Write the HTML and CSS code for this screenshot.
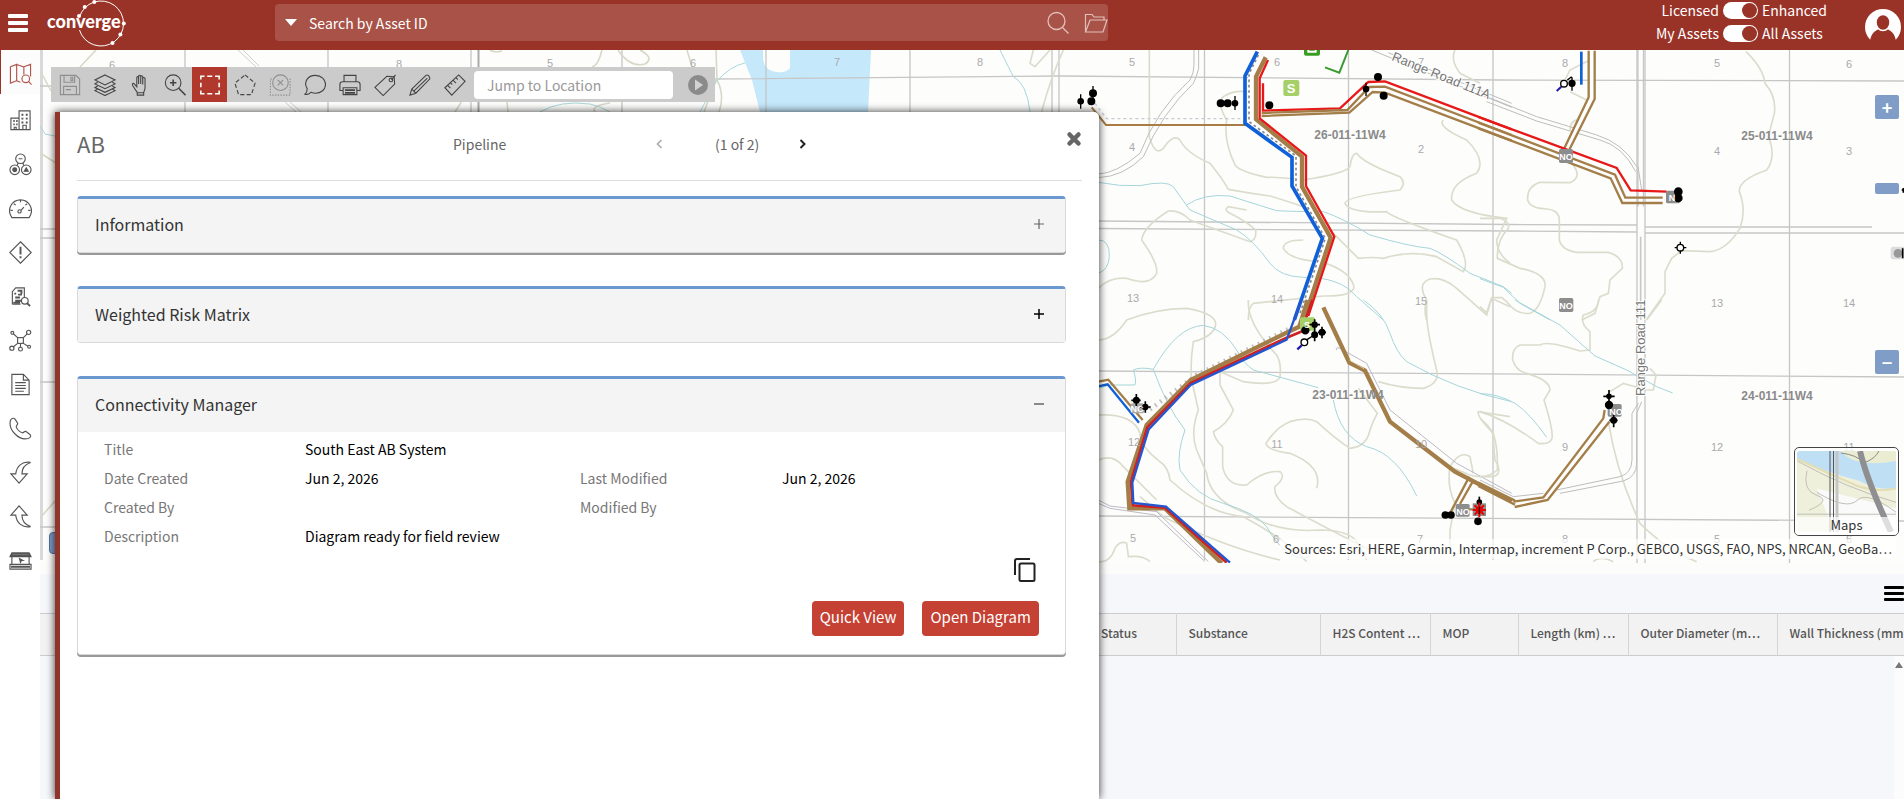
FILE: index.html
```html
<!DOCTYPE html>
<html lang="en">
<head>
<meta charset="utf-8">
<title>Converge</title>
<link rel="stylesheet" href="styles.css">
</head>
<body>
<header class="topbar">
  <button class="menu-btn" aria-label="Menu"><i></i><i></i><i></i></button>
  <svg class="logo" viewBox="44 0 86 50" role="img" aria-label="converge">
    <path d="M79.500 17A22.500 22.500 0 1 1 79.500 30" fill="none" stroke="#fff" stroke-width="1"/>
    <g fill="#fff"><circle cx="94.300" cy="2" r="2"/><circle cx="84.700" cy="7" r="2"/><circle cx="79" cy="16" r="2"/><circle cx="123.800" cy="23.500" r="2"/><circle cx="120.400" cy="34.500" r="2"/><circle cx="112.500" cy="43" r="2"/></g>
    <text x="47" y="28" class="logo-text">converge</text>
  </svg>
  <form class="search">
    <button type="button" class="caret" aria-label="Search type"></button>
    <input type="text" class="search-input" placeholder="Search by Asset ID" aria-label="Search by Asset ID">
    <button type="button" class="bare" aria-label="Search"><svg width="24" height="24" viewBox="0 0 24 24" fill="none" stroke="#e3bfba" stroke-width="1.3"><circle cx="10.500" cy="10" r="8.500"/><path d="M16.500 16.500L22.500 22.500"/></svg></button>
    <button type="button" class="bare" aria-label="Open saved"><svg width="24" height="24" viewBox="0 0 24 24" fill="none" stroke="#e3bfba" stroke-width="1.2"><path d="M1.500 21V3.500H8L10 6H20V9M1.500 21L6 9H23L19 21Z"/></svg></button>
  </form>
  <div class="switches">
    <label for="sw1">Licensed</label><input type="checkbox" id="sw1" class="switch" checked><span>Enhanced</span>
    <label for="sw2">My Assets</label><input type="checkbox" id="sw2" class="switch" checked><span>All Assets</span>
  </div>
  <button class="bare avatar" aria-label="Account"><svg width="36" height="36" viewBox="0 0 36 36"><circle cx="18" cy="18" r="18" fill="#fff"/><path d="M18 6a6.500 7.500 0 0 1 3.500 14C27 21.500 31 26 31.500 36H4.500C5 26 9 21.500 14.500 20A6.500 7.500 0 0 1 18 6Z" fill="#993328"/><ellipse cx="18" cy="13.500" rx="7" ry="8" fill="#993328" stroke="#fff" stroke-width="1.500"/></svg></button>
</header>
<div class="body">
<nav class="rail">
  <button class="rail-item active" aria-label="Map"><svg viewBox="0 0 24 24"><path d="M1.500 4L8 1.500V18.500L1.500 21ZM8 1.500L15.500 4V12M8 18.500L12 20M15.500 4L22.500 1.500V14"/><circle cx="17.500" cy="16.500" r="4"/><path d="M20.500 19.500L23.500 22.500"/></svg></button>
  <div class="rail-list">
  <button class="rail-item" aria-label="Facilities"><svg viewBox="0 0 24 24"><path d="M2 21.500V9.500H10.500V2H22V21.500ZM10.500 9.500V21.500M14.500 21.500V17H18V21.500M5.500 21.500V19H7.500V21.500"/><path d="M4.500 12.500h1.500M7.500 12.500h1.500M4.500 16h1.500M7.500 16h1.500M13 6h2M17.500 6h2M13 10h2M17.500 10h2M13 14h2M17.500 14h2" stroke-width="2"/></svg></button>
  <button class="rail-item" aria-label="Risk"><svg viewBox="0 0 24 24"><circle cx="12" cy="6" r="5"/><circle cx="6" cy="17.500" r="5"/><circle cx="18" cy="17.500" r="5"/><path d="M10 6h4M9.500 10.500L8.500 13M14.500 10.500L15.500 13"/><circle cx="6" cy="17.500" r="2" fill="#555"/><path d="M16 19h4l-2-3.500z" fill="#555"/></svg></button>
  <button class="rail-item" aria-label="Dashboard"><svg viewBox="0 0 24 24"><path d="M3 21.500C-3 13 3 3 12 3S27 13 21 21.500Z"/><path d="M12 3V5.500M5 7L7 8.500M1.500 14H4M19 7L17 8.500M22.500 14H20"/><circle cx="11" cy="15" r="1.700"/><path d="M12.500 14L15.500 10.500"/></svg></button>
  <button class="rail-item" aria-label="Alerts"><svg viewBox="0 0 24 24"><path d="M12 .8L23.200 12L12 23.200L.8 12Z"/><path d="M12 6V14M12 16V18" stroke-width="2"/></svg></button>
  <button class="rail-item" aria-label="Reports"><svg viewBox="0 0 24 24"><path d="M3.500 20V7L7 3H16V13M3.500 20H12"/><path d="M5.500 9h2M6.500 13h5M6.500 16.500h6M9 6h5M9.500 10h4M13 9V6M4.500 18.500h7" stroke-width="2"/><circle cx="16.500" cy="16.500" r="3.500"/><path d="M19 19L22 22" stroke-width="2"/></svg></button>
  <button class="rail-item" aria-label="Connectivity"><svg viewBox="0 0 24 24"><rect x="9" y="9" width="6" height="6"/><path d="M9 9L4.500 5M15 9L19 5M9 15L4 19M15 15L20 18M12 15V19"/><circle cx="3.500" cy="4" r="1.500"/><circle cx="20.500" cy="3.500" r="2.200"/><circle cx="3" cy="20" r="2.200"/><circle cx="12" cy="21" r="2"/><circle cx="21" cy="18.500" r="1.500"/></svg></button>
  <button class="rail-item" aria-label="Documents"><svg viewBox="0 0 24 24"><path d="M3 1.500H15L21 7.500V22.500H3ZM15 1.500V7.500H21M6.500 10h11M6.500 13h11M6.500 16h11M6.500 19h9"/></svg></button>
  <button class="rail-item" aria-label="Calls"><svg viewBox="0 0 24 24"><path d="M1.500 3.500C3 1 5 .5 6.500 2.500L9 6.500C9.500 8 7.500 9 7.500 10C8.500 13 11 15.500 14 16.500C15.500 16.500 16 14.500 17.500 15L21.500 18C23.500 19.500 22.500 21.500 20 22.500C10 25-1 13 1.500 3.500Z"/></svg></button>
  <button class="rail-item" aria-label="Check in"><svg viewBox="0 0 24 24"><path d="M22.500 1.500C14 0 8 5 7 13.500H2L10.500 23L19 13.500H13.500C13.500 8 16.500 3.500 22.500 1.500Z"/></svg></button>
  <button class="rail-item" aria-label="Check out"><svg viewBox="0 0 24 24"><path d="M22.500 22.500C14 24 8 19 7 10.500H2L10.500 1L19 10.500H13.500C13.500 16 16.500 20.500 22.500 22.500Z"/></svg></button>
  <button class="rail-item" aria-label="Operations"><svg viewBox="0 0 24 24"><path d="M3 16V5H21V16M1 8L3 4H21L23 8ZM1 21V16H23V21Z"/><path d="M11 10l1 4 1-2h1.500z" fill="#555"/><path d="M2 18.500H22M2 6.500H22" stroke-width="2"/></svg></button>
  </div>
</nav>
<main class="main">
  <section class="map" aria-label="Map">
    <svg class="map-canvas" viewBox="40 50 1864 513" preserveAspectRatio="xMinYMin slice" fill="none">
      <rect x="40" y="50" width="1864" height="520" fill="#fdfdfc"/>
      <path d="M740 50L752 80L760 112H868L871 50H790V68Q787 73 777 72Q764 71 763 58V50Z" fill="#c5e8fb"/>
      <!-- section grid -->
      <g stroke="#c6c6c6" stroke-width="1.300">
        <path d="M40 50V560M42 50V560M185 50V560M328 50V560M471 50V560M622 50V560M766 50V560M910 50V560M1052 50V560M1059 50V560M1204.500 50V560M1348.500 50V560M1493 50V560M1637 50V563M1645 50V563M1789.500 50V563"/>
        <path d="M40 86H55M40 229H60M40 238H60M40 382H60M40 527H60M715 79L1060 76L1500 80L1904 81M1098 221L1510 224.500L1637 225M1645 227H1872M1098 228.500L1510 231L1637 232M1645 233H1904M1098 371L1904 377M1098 516L1904 521"/>
        <path d="M478.500 50V112" stroke="#aaa" stroke-width="2"/>
      </g>
      <g stroke="#cfcfcf"><path d="M238 50L256 67M243 50L259 66M284 101L296 112M289 101L301 112"/></g>
      <!-- contours west of the panel -->
      <g stroke="#d9d8c8" stroke-width="1.600">
        <path d="M96 50L80 67M41 72L51 91M40 153L56 163M40 518L56 500M602 50Q598 66 592 67M490 50Q495 53 502 51M618 50Q630 68 645 64Q655 58 640 50M687 50L692 67M716 50L717 80Q725 95 719 112M455 112L462 101M508 112L507 102M595 112Q590 106 610 103M704 112L716 80"/>
      </g>
      <g stroke="#a9d8dc"><path d="M40 126L45 134L60 137M540 112Q560 100 590 104Q600 106 610 112M700 112L716 82Q730 66 745 63"/></g>
      <!-- north west sheet -->
      <g transform="translate(1090 40) scale(.33333)">
        <g stroke="#dcdccd" stroke-width="5">
          <path d="M178 30V290Q195 350 220 325Q250 280 270 300Q290 340 360 370Q400 420 415 448Q480 460 540 468Q580 480 640 500L740 590L805 655Q850 650 880 655Q960 630 1040 650L1120 695Q1140 670 1100 600Q900 530 890 515Q780 520 765 490Q765 470 930 450Q950 430 930 410Q820 370 800 340Q785 340 780 380Q770 400 640 420Q560 410 530 412Q450 395 435 375Q400 300 410 240Q380 190 400 170Q430 150 470 155"/>
          <path d="M25 745Q60 710 110 715Q180 740 200 700Q205 670 155 600Q160 560 235 513Q270 510 300 540L480 605Q500 600 497 570Q470 545 420 520Q400 510 415 500L470 510"/>
          <path d="M640 600Q580 600 580 625Q600 660 690 665Q780 690 792 740Q790 770 700 768L490 790Q475 800 475 840M1095 30Q1080 60 1110 100L1170 130M1060 240Q1040 260 1130 300Q1190 360 1160 400Q1080 430 1085 480Q1110 520 1250 535L1220 600Q1220 640 1260 670M1010 840Q1000 810 1010 780Q980 730 1020 717Q1060 710 1100 745L1190 825L1205 775L1260 800"/>
          <path d="M-80 30Q-120 120 -145 215M-170 30L-180 70L-165 80L-120 30"/>
        </g>
        <g stroke="#a5d5da" stroke-width="3"><path d="M25 427Q90 440 150 437Q230 420 250 440Q270 470 300 510Q370 540 440 570Q490 600 540 670Q570 710 640 712Q750 710 800 770L880 840M290 495Q340 460 420 468Q520 500 560 512Q610 515 700 515Q760 535 840 585Q960 620 1020 625Q1060 640 1140 700L1240 740L1265 760M25 600Q60 600 58 650Q55 690 25 700"/><path d="M-270 30Q-240 90 -230 110Q-190 130 -180 215"/></g>
        <g stroke="#bdbdbd" stroke-width="3"><path d="M312 30V75Q312 100 300 120Q200 210 150 340Q80 400 25 402M326 30V85Q320 110 310 130Q215 220 160 350Q100 410 25 413"/><path d="M845 30L1265 202M895 38L1265 190"/></g>
        <path d="M15 190L50 236H460" stroke="#c9c9cf" stroke-width="4" stroke-dasharray="9 9"/>
        <path d="M5 202L48 255H470L500 235" stroke="#a87c43" stroke-width="6"/>
        <path d="M485 95V245L624 345V440L712 595L636 820" stroke="#fff" stroke-width="22"/>
        <path d="M505 45L477 102V245L618 348V440L706 595L630 820" stroke="#888" stroke-width="5" stroke-dasharray="8 8"/>
        <path d="M502 35L465 108V250L606 352V438L697 595L613 840" stroke="#1060d8" stroke-width="11"/>
        <path d="M527 52L498 110V238L636 350V440L722 593L645 830" stroke="#a37e48" stroke-width="13"/>
        <path d="M534 60L509 115V235L648 347V438L733 590L655 828M519 130V212L750 205L835 126L885 124L1265 268" stroke="#e81818" stroke-width="7"/>
        <path d="M515 228L778 218L848 156L885 158L1265 302M515 219L772 210L838 141L885 140L1265 285" stroke="#a37e48" stroke-width="7"/>
        <path d="M705 82L748 98L775 30" stroke="#3b9a30" stroke-width="6"/>
        <rect x="642" y="10" width="48" height="37" rx="6" fill="#3a9d23"/><path d="M655 30V35H677V30" stroke="#fff" stroke-width="6"/>
        <rect x="580" y="120" width="48" height="48" rx="6" fill="#a6cf67"/>
        <g fill="#000" stroke="#000" stroke-width="4"><circle cx="9" cy="160" r="10"/><circle cx="4" cy="184" r="10"/><circle cx="-28" cy="184" r="8"/><path d="M9 138V180M-28 163V206"/><circle cx="392" cy="190" r="10"/><circle cx="413" cy="190" r="10"/><circle cx="435" cy="190" r="8"/><path d="M435 168V210"/><circle cx="538" cy="196" r="10"/><circle cx="864" cy="111" r="10"/><circle cx="828" cy="147" r="8"/><path d="M828 128V168"/><circle cx="881" cy="167" r="10"/></g>
      </g>
      <!-- north east sheet -->
      <g transform="translate(1480 40) scale(.33333)">
        <g stroke="#dcdccd" stroke-width="5"><path d="M798 35Q850 85 855 130Q890 170 883 220L865 290Q890 350 860 390Q775 420 778 455Q800 510 780 565Q740 630 690 635L605 632L575 655L555 695V760L500 838"/><path d="M340 55L270 90L255 120M270 155L320 180M300 238Q270 240 270 270M275 370Q310 410 270 428L180 427Q140 440 143 480Q150 505 200 507Q240 510 238 545V600Q245 630 290 637H385Q430 650 427 685L390 720L385 760L360 770L345 820L305 840M0 535H60Q90 545 85 565Q50 600 52 655L120 685Q200 700 195 740Q180 810 150 820Q110 825 80 785L65 773H35L20 818L0 800"/></g>
        <path d="M0 716L70 742L120 790L210 840" stroke="#a5d5da" stroke-width="3"/>
        <g stroke="#bdbdbd" stroke-width="3"><path d="M20 170L170 230Q270 260 350 285Q430 310 470 380M20 185L170 243L360 300Q430 320 467 395M474 30V500M490 30V500M474 380L485 450"/></g>
        <path d="M482 590V840" stroke="#c8c8c8" stroke-width="5"/>
        <path d="M304 35V134" stroke="#1060d8" stroke-width="8"/>
        <path d="M335 32V175L257 330" stroke="#fff" stroke-width="12"/>
        <path d="M326 32V172L248 335M344 32V177L265 335" stroke="#a37e48" stroke-width="7"/>
        <path d="M-5 231L410 384L452 451L560 455" stroke="#e81818" stroke-width="7"/>
        <path d="M-5 248L405 404L436 473H548M-5 265L392 415L427 489H548" stroke="#a37e48" stroke-width="7"/>
        <g fill="#8d8d8d"><rect x="237" y="327" width="42" height="42" rx="5"/><rect x="558" y="452" width="42" height="38" rx="5"/><rect x="237" y="774" width="43" height="42" rx="5"/></g>
        <g fill="#000" stroke="#000" stroke-width="4"><circle cx="595" cy="455" r="11"/><circle cx="595" cy="474" r="11"/><circle cx="276" cy="130" r="9"/><path d="M276 112V152M262 120L275 110"/></g>
        <circle cx="252" cy="131" r="10" fill="#fff" stroke="#000" stroke-width="4"/><path d="M244 140L230 153" stroke="#2018a8" stroke-width="6"/>
        <circle cx="601" cy="623" r="10" stroke="#000" stroke-width="4"/><path d="M601 605V614M601 632V641M584 623H592M610 623H619" stroke="#000" stroke-width="4"/>
        <rect x="1232" y="620" width="50" height="38" rx="8" fill="#ddd"/><circle cx="1254" cy="640" r="13" fill="#999"/>
        <path d="M1268 625V655M1265 450H1272M1270 444V458" stroke="#000" stroke-width="5"/>
      </g>
      <!-- south west sheet -->
      <g transform="translate(1090 300) scale(.33333)">
        <g stroke="#dcdccd" stroke-width="5">
          <path d="M25 120Q70 120 110 60Q200 25 290 25Q380 40 377 75Q370 110 310 125Q300 190 305 240L325 330Q300 400 320 450L350 520Q360 600 470 640Q560 700 690 690Q790 690 810 740L830 780"/>
          <path d="M475 0Q470 70 560 165Q575 190 570 230Q560 260 460 245L390 215V255L430 330Q415 370 370 395Q375 420 398 440V500Q410 560 470 555Q520 510 570 515Q590 530 555 560Q550 590 590 620Q700 680 850 755"/>
          <path d="M1010 0V40Q1010 90 1040 210Q1050 250 1000 265Q930 265 865 245M150 590L220 650Q400 740 570 780M25 345Q130 340 150 400Q150 440 210 485Q235 500 240 540Q350 640 460 650Q590 720 650 785M25 480Q70 460 100 500L200 600M680 565Q700 500 600 460Q530 450 528 430Q560 380 600 365Q650 350 680 365Q740 420 780 445Q830 440 840 390Q850 360 862 340L805 265M1260 350L1165 335Q1160 350 1210 400Q1225 450 1222 510Q1190 540 1140 525L1080 500M1080 500Q1110 450 1140 470L1150 520M1080 500Q1070 560 1095 610L1080 690V740M25 785Q60 790 75 745Q90 720 110 730L115 770Q160 765 180 785"/>
        </g>
        <g stroke="#a5d5da" stroke-width="3"><path d="M25 265L60 255H135Q140 240 130 210Q150 200 190 208Q260 80 340 76Q400 85 440 150Q460 190 490 210L685 263M190 208Q230 320 285 390Q260 460 270 510Q320 590 400 610Q500 640 530 680Q580 770 640 775L660 770M730 300Q750 410 830 440Q920 460 980 588M820 0Q880 40 900 100Q920 160 950 185Q1100 270 1265 305"/></g>
        <g stroke="#bdb8c4" stroke-width="3"><path d="M740 150Q735 140 750 145L830 190Q860 250 900 330L1100 490L1265 580M25 600L60 618L200 635L355 785M25 610L60 625L195 645L345 785"/></g>
        <path d="M180 328L320 225L600 85" stroke="#bfbfbf" stroke-width="14" stroke-dasharray="5 14"/>
        <path d="M653 0L628 80L600 93L302 240L170 375L113 545L118 625H225L395 790" stroke="#a37e48" stroke-width="13"/>
        <path d="M667 0L648 55M640 92L590 113L302 249L172 382L123 545L128 616L225 623L410 788" stroke="#d02020" stroke-width="8"/>
        <path d="M634 0L590 119L302 255L176 388L127 548L130 609L228 620L420 788" stroke="#2456cf" stroke-width="7"/>
        <path d="M25 245L55 239L158 360" stroke="#a37e48" stroke-width="7"/><path d="M25 259L53 253L147 368" stroke="#1060d8" stroke-width="7"/>
        <path d="M700 22L778 188L825 212L900 365L1095 515L1265 604" stroke="#a37e48" stroke-width="13"/>
        <path d="M778 180L822 206" stroke="#f4e8d2" stroke-width="2"/>
        <path d="M1138 530L1082 636M1148 545L1110 612M1130 628H1150" stroke="#a37e48" stroke-width="7"/>
        <rect x="630" y="52" width="45" height="40" rx="5" fill="#a6cf67"/>
        <g fill="#8d8d8d"><rect x="1097" y="612" width="42" height="38" rx="5"/><rect x="122" y="310" width="40" height="30" rx="5" fill="#aaa"/><rect x="1148" y="610" width="40" height="38"/></g>
        <g fill="#000" stroke="#000" stroke-width="5"><circle cx="646" cy="91" r="10"/><circle cx="674" cy="74" r="7"/><circle cx="696" cy="97" r="8"/><circle cx="674" cy="104" r="8"/><path d="M674 58V124M658 74H690M696 80V115M684 97H708"/><circle cx="139" cy="301" r="8"/><circle cx="166" cy="321" r="7"/><path d="M139 282V318M124 301H152M166 304V338M150 321H182"/><circle cx="1066" cy="645" r="9"/><circle cx="1083" cy="645" r="9"/><circle cx="1164" cy="664" r="9"/><circle cx="1168" cy="606" r="6"/><path d="M1168 590V640"/></g>
        <circle cx="643" cy="127" r="10" fill="#fff" stroke="#000" stroke-width="4"/><path d="M635 136L622 148" stroke="#2018a8" stroke-width="7"/><path d="M651 119L668 108" stroke="#000" stroke-width="4"/>
        <path d="M1168 608V652M1148 630H1188M1154 616L1182 644M1182 616L1154 644" stroke="#e80000" stroke-width="6"/><circle cx="1168" cy="630" r="11" fill="#e80000"/><path d="M1168 620V642" stroke="#000" stroke-width="3"/>
      </g>
      <!-- south east sheet -->
      <g transform="translate(1480 300) scale(.33333)">
        <g stroke="#dcdccd" stroke-width="5"><path d="M355 0Q355 35 310 45Q300 70 330 95V150L300 153Q200 120 180 135H120Q95 145 98 180Q110 215 140 220Q210 240 210 270L192 300Q220 390 216 415Q210 435 175 430Q80 360 0 335M0 355Q30 380 38 400L45 480Q70 520 40 530H0M390 275L430 250L500 270H520L528 225L510 205M500 60L545 0M385 365Q410 520 480 670Q560 750 650 785M340 785Q360 765 400 785"/></g>
        <g stroke="#a5d5da" stroke-width="3"><path d="M105 0L240 75Q290 120 345 168L440 210L530 260L578 279M0 281Q50 280 105 310Q150 340 200 412"/></g>
        <g stroke="#bdbdbd" stroke-width="3"><path d="M485 305L470 340V490Q470 530 430 543L240 580M475 310L456 340V480Q455 520 420 530L230 570M0 540L100 590L190 580"/></g>
        <path d="M-5 548L105 602M-5 558L105 614" stroke="#a37e48" stroke-width="7"/>
        <path d="M100 605L190 592L370 355L374 330M104 621L203 600L388 365" stroke="#a37e48" stroke-width="7"/>
        <rect x="383" y="312" width="42" height="38" rx="5" fill="#8d8d8d"/>
        <g fill="#000" stroke="#000" stroke-width="5"><circle cx="387" cy="315" r="10"/><circle cx="387" cy="289" r="6"/><circle cx="401" cy="361" r="8"/><path d="M387 270V305M370 289H404M401 342V382M388 361H413"/></g>
      </g>
      <g class="tag"><text x="1566" y="160">NO</text><text x="1672" y="201">N</text><text x="1566" y="309">NO</text><text x="1463" y="515">NO</text><text x="1616" y="415">NO</text><text x="1307" y="328">S</text><text x="1137" y="412">NC</text></g>
      <text class="pt-s" x="1291" y="93">S</text>
      <g class="sec">
        <text x="112" y="69">6</text><text x="399" y="68">8</text><text x="550" y="67">5</text><text x="693" y="67">6</text><text x="837" y="66">7</text><text x="980" y="66">8</text><text x="1132" y="66">5</text><text x="1277" y="66">6</text><text x="1421" y="66">7</text><text x="1565" y="67">8</text><text x="1717" y="67">5</text><text x="1849" y="68">6</text>
        <text x="1132" y="151">4</text><text x="1421" y="153">2</text><text x="1717" y="155">4</text><text x="1849" y="155">3</text>
        <text x="1133" y="302">13</text><text x="1277" y="303">14</text><text x="1421" y="305">15</text><text x="1717" y="307">13</text><text x="1849" y="307">14</text>
        <text x="1134" y="446">12</text><text x="1277" y="448">11</text><text x="1421" y="448">10</text><text x="1565" y="451">9</text><text x="1717" y="451">12</text><text x="1849" y="451">11</text>
        <text x="1133" y="542">5</text><text x="1276" y="543">6</text><text x="1420" y="543">7</text><text x="1565" y="543">8</text><text x="1717" y="543">5</text><text x="1849" y="543">6</text>
      </g>
      <g class="twp"><text x="1350" y="139">26-011-11W4</text><text x="1777" y="140">25-011-11W4</text><text x="1348" y="399">23-011-11W4</text><text x="1777" y="400">24-011-11W4</text></g>
      <g class="road"><text transform="translate(1391 60) rotate(22)">Range Road 111A</text><text transform="translate(1645 396) rotate(-90)">Range Road 111</text></g>
    </svg>
    <button class="side-tab" aria-label="Expand"></button>
    <div class="toolbar">
      <button class="tool dim" aria-label="Save"><svg viewBox="0 0 24 24"><path d="M1.500 1.500H18.500L22.500 5.500V22.500H1.500ZM5.500 1.500V9H17V1.500M13 3.500H15V7H13ZM5 22.500V13.500H19V22.500M7.500 17H13"/></svg></button>
      <button class="tool" aria-label="Layers"><svg viewBox="0 0 24 24"><path d="M12 1L23 6.500L12 12L1 6.500ZM4 9L1 10.800L12 16L23 10.800L20 9M4 13L1 14.800L12 20L23 14.800L20 13M1 14.800"/><path d="M4 16.500L1 18.200L12 23.500L23 18.200L20 16.500"/></svg></button>
      <button class="tool" aria-label="Pan"><svg viewBox="0 0 24 24"><path d="M7.500 18L4 12.500C3 10.500 5 9.500 6 11L8.500 14V4C8.500 2.500 10.500 2.500 10.500 4V11V2.500C10.500 1 12.800 1 12.800 2.500V11V3C12.800 1.500 15 1.500 15 3V11.500V5C15 3.500 17.500 3.500 17.500 5V15C17.500 18 16 19 16 20.500H9C9 19.500 8.500 19 7.500 18ZM9 20.500V23H16V20.500"/></svg></button>
      <button class="tool" aria-label="Zoom in"><svg viewBox="0 0 24 24"><circle cx="10" cy="9.500" r="8.500"/><path d="M16 15.500L23.500 23M10 6V13M6.500 9.500H13.500" stroke-width="1.700"/></svg></button>
      <button class="tool on" aria-label="Select rectangle"><svg viewBox="0 0 24 24"><path d="M2 6V2.500H6M9 2.500H14.500M17.500 2.500H22V6M22 9.500V14.500M22 18V21.500H17.500M14.500 21.500H9M6 21.500H2V18M2 14.500V9.500" stroke-width="1.700"/></svg></button>
      <button class="tool" aria-label="Select polygon"><svg viewBox="0 0 24 24"><path d="M12 1L23 10L19 22.500H5L1 10Z" stroke-dasharray="4.500 2.500"/></svg></button>
      <button class="tool dim" aria-label="Clear selection"><svg viewBox="0 0 24 24"><path d="M3 5.500H1.500V23H23V5.500H21" stroke-dasharray="1.500 1.500"/><circle cx="12.500" cy="9.500" r="8.500"/><path d="M9.500 6.500L15.500 12.500M15.500 6.500L9.500 12.500"/></svg></button>
      <button class="tool" aria-label="Comment"><svg viewBox="0 0 24 24"><path d="M3.500 16C-1 9 4 1.500 12.500 1.500C19 1.500 23.500 6 23.500 11.500S18.500 21 12.500 21C10.500 21 9 20.500 7.500 20C6 21.500 3 22.500 1 22C3 20.500 3.500 19 3.500 16Z"/></svg></button>
      <button class="tool" aria-label="Print"><svg viewBox="0 0 24 24"><path d="M5.500 8.500V1.500H18.500V8.500M4.500 18H1V11.500Q1 8.500 4 8.500H20Q23 8.500 23 11.500V18H19.500M4.500 15H19.500V22.500H4.500Z"/><path d="M6.500 17.500H17.500M6.500 20.500H17.500" stroke-width="2"/></svg></button>
      <button class="tool" aria-label="Tag"><svg viewBox="0 0 24 24"><path d="M1 14.500L14 2.500L22 3L22.500 11L10 23.500Z"/><circle cx="18.500" cy="6.500" r="2"/><path d="M19 6.500L23.500 1"/></svg></button>
      <button class="tool" aria-label="Draw"><svg viewBox="0 0 24 24"><path d="M1 23L3 16.500L18.500 1.500Q20 .5 21.500 2T22.500 5.500L7.500 21ZM3 16.500L7.500 21M5.500 18.500L20 4.500"/></svg></button>
      <button class="tool" aria-label="Measure"><svg viewBox="0 0 24 24"><path d="M1 15L16 1L23 8L8.500 23ZM4 12.500L7 15.500M7 9.500L9 11.500M10 7L13 10M13 4L15 6"/></svg></button>
      <input class="jump" type="text" placeholder="Jump to Location" aria-label="Jump to Location">
      <button class="go" aria-label="Go"><svg width="20" height="20" viewBox="0 0 20 20"><circle cx="10" cy="10" r="10" fill="#8b8b8b"/><path d="M7 4.500L15 10L7 15.500Z" fill="#d2d2d2"/></svg></button>
    </div>
    <div class="zoombar"><button class="zbtn" aria-label="Zoom in">+</button><i class="zthumb"></i><button class="zbtn" aria-label="Zoom out">−</button></div>
    <button class="basemap"><svg viewBox="0 0 99 82" preserveAspectRatio="none"><rect width="99" height="82" fill="#eef0dc"/><path d="M0 0H99V38Q80 40 62 30Q30 22 0 8Z" fill="#bfdff5"/><path d="M43 0Q60 18 99 10V0Z" fill="#eaedd2"/><path d="M0 8Q30 22 62 36Q80 42 99 38" stroke="#e3ddb0" stroke-width="2" fill="none"/><path d="M20 38L99 58V82H37Z" fill="#fafafa"/><path d="M0 10Q50 38 99 52M0 64H99M10 20Q5 40 20 45T12 60M20 42Q50 60 60 50T99 62" stroke="#c0beb6" fill="none"/><path d="M33 0V82M36.500 0V82" stroke="#555"/><path d="M40 0V82" stroke="#c5c5c5" stroke-width="3"/><path d="M44 2Q60 4 67 12Q78 8 82 0" stroke="#888" fill="none"/><path d="M63 0Q70 30 94 82" stroke="#8f8f92" stroke-width="6" fill="none"/></svg><span>Maps</span></button>
    <p class="attrib">Sources: Esri, HERE, Garmin, Intermap, increment P Corp., GEBCO, USGS, FAO, NPS, NRCAN, GeoBa…</p>
  </section>
  <section class="results">
    <div class="results-bar"><button class="menu-btn dark" aria-label="Table menu"><i></i><i></i><i></i></button></div>
    <table class="grid">
      <colgroup><col><col class="w87"><col class="w144"><col class="w110"><col class="w88"><col class="w110"><col class="w149"><col class="w127"></colgroup>
      <thead><tr><td></td><th>Status</th><th>Substance</th><th>H2S Content …</th><th>MOP</th><th>Length (km) …</th><th>Outer Diameter (m…</th><th class="last">Wall Thickness (mm…</th></tr></thead>
    </table>
    <div class="scroll"><i></i></div>
  </section>
  <aside class="panel">
    <div class="panel-head">
      <h1>AB</h1><span class="kind">Pipeline</span>
      <div class="pager"><button class="bare" aria-label="Previous" disabled><svg width="7" height="10" viewBox="0 0 7 10"><path d="M5.500 1L1.500 5L5.500 9" fill="none" stroke="#aaa" stroke-width="1.600"/></svg></button><span>(1 of 2)</span><button class="bare" aria-label="Next"><svg width="7" height="10" viewBox="0 0 7 10"><path d="M1.500 1L5.500 5L1.500 9" fill="none" stroke="#222" stroke-width="2"/></svg></button></div>
      <button class="bare close" aria-label="Close"><svg width="16" height="16" viewBox="0 0 16 16"><path d="M3.500 3.500L12.500 12.500M12.500 3.500L3.500 12.500" stroke="#666" stroke-width="4.500" stroke-linecap="round"/></svg></button>
    </div>
    <div class="cards">
      <section class="card raised"><h2><button class="card-head">Information<svg width="12" height="12" viewBox="0 0 12 12"><path d="M1 6H11M6 1V11" stroke="#666" stroke-width="1.200"/></svg></button></h2></section>
      <section class="card"><h2><button class="card-head">Weighted Risk Matrix<svg width="12" height="12" viewBox="0 0 12 12"><path d="M1 6H11M6 1V11" stroke="#000" stroke-width="1.500"/></svg></button></h2></section>
      <section class="card raised"><h2><button class="card-head">Connectivity Manager<svg width="12" height="12" viewBox="0 0 12 12"><path d="M1 6H11" stroke="#666" stroke-width="1.500"/></svg></button></h2>
        <dl class="fields">
          <dt>Title</dt><dd class="wide">South East AB System</dd>
          <dt>Date Created</dt><dd>Jun 2, 2026</dd><dt>Last Modified</dt><dd>Jun 2, 2026</dd>
          <dt>Created By</dt><dd></dd><dt>Modified By</dt><dd></dd>
          <dt>Description</dt><dd class="wide">Diagram ready for field review</dd>
        </dl>
        <div class="copy-row"><button class="bare" aria-label="Copy"><svg width="24" height="26" viewBox="0 0 24 26" fill="none" stroke="#222" stroke-width="2"><path d="M2 18V4Q2 2 4 2H17"/><rect x="6.500" y="6.500" width="15" height="17.500" rx="1.500"/></svg></button></div>
        <div class="actions"><button class="btn">Quick View</button><button class="btn">Open Diagram</button></div>
      </section>
    </div>
  </aside>
</main>
</div>
</body>
</html>
```
FILE: styles.css
```css
* { box-sizing: border-box; }
body {
  margin: 0; height: 100vh; overflow: hidden;
  display: flex; flex-direction: column;
  font: 14px/20px "Noto Sans CJK SC", "Noto Sans", sans-serif; color: #333; background: #fff;
}
button, input { font: inherit; color: inherit; margin: 0; }
button { border: 0; padding: 0; background: none; cursor: pointer; }
h1, h2, p, dl, dd { margin: 0; font-weight: 400; }
.bare { display: flex; align-items: center; justify-content: center; }

/* top bar */
.topbar { flex: none; height: 50px; display: flex; align-items: center; background: #993328; color: #fff; padding: 0 3px 0 8px; }
.menu-btn { width: 20px; display: flex; flex-direction: column; gap: 3px; margin-bottom: 4px; }
.menu-btn i { height: 4px; border-radius: 1px; background: #fff; }
.logo { width: 86px; height: 50px; margin-left: 16px; flex: none; }
.logo-text { font: 900 18px Lato, sans-serif; fill: #fff; }
.search { display: flex; align-items: center; height: 37px; width: 44%; margin: 0 0 5px 145px; background: #a85248; border-radius: 4px; gap: 14px; }
.caret { margin-left: 10px; border: 6px solid transparent; border-top: 7px solid #fff; border-bottom: 0; width: 12px; }
.search-input { flex: 1; min-width: 0; border: 0; background: none; outline: 0; padding: 0; }
.search-input::placeholder { color: #fff; opacity: 1; }
.search .caret + .search-input { margin-left: -2px; }
.switches { margin-left: auto; display: grid; grid-template-columns: auto 35px auto; gap: 3px 4px; align-items: center; text-align: right; margin-bottom: 7px; }
.switches span { text-align: left; }
.switch { appearance: none; width: 35px; height: 17px; border-radius: 9px; background: #fff; position: relative; }
.switch::after { content: ""; position: absolute; right: 1px; top: 1px; width: 15px; height: 15px; border-radius: 50%; background: #993328; }
.avatar { margin-left: 38px; height: 32px; width: 36px; overflow: hidden; align-items: flex-start; }

/* left rail */
.body { flex: 1; display: flex; min-height: 0; }
.rail { width: 40px; flex: none; display: flex; flex-direction: column; background: #fff; }
.rail-item { flex: none; height: 44px; display: flex; align-items: center; justify-content: center; }
.rail-item svg { width: 23px; height: 23px; fill: none; stroke: #555; stroke-width: 1.2; }
.rail-item.active { background: #fcfcfc; border-left: 1px solid #993328; padding-top: 4px; }
.rail-item.active svg { stroke: #b0554c; }
.rail-list { display: flex; flex-direction: column; padding-top: 4px; }

/* map */
.main { flex: 1; min-width: 0; position: relative; display: flex; flex-direction: column; }
.map { flex: 1; min-height: 0; position: relative; overflow: hidden; background: #fdfdfc; }
.map-canvas { display: block; width: 100%; height: 100%; }
.map-canvas text { font-family: "Liberation Sans", Arial, sans-serif; }
.sec text { font-size: 11px; fill: #aaa; text-anchor: middle; }
.twp text { font-size: 12px; font-weight: 700; fill: #8a8a8a; text-anchor: middle; }
.tag text { font-size: 9px; font-weight: 700; fill: #fff; text-anchor: middle; }
.pt-s { font-size: 13px; font-weight: 700; fill: #fff; text-anchor: middle; }
.road text { font-size: 13px; fill: #777; stroke: #fff; stroke-width: 2px; paint-order: stroke; }
.toolbar { position: absolute; left: 11px; top: 17px; height: 35px; width: 664px; padding-left: 1px; display: flex; align-items: center; background: #cbcbcb; }
.tool { width: 35px; height: 35px; display: flex; align-items: center; justify-content: center; }
.tool svg { width: 22px; height: 22px; fill: none; stroke: #444; stroke-width: 1.2; }
.tool.dim svg { stroke: #8e8e8e; }
.tool.on { background: #b0382c; }
.tool.on svg { stroke: #fff; }
.jump { width: 199px; height: 28px; margin-left: 2px; border: 0; border-radius: 4px; background: #fff; padding: 0 13px; }
.jump::placeholder { color: #999; opacity: 1; }
.go { margin-left: 15px; display: flex; }
.zoombar { position: absolute; right: 5px; top: 45px; width: 24px; height: 279px; display: flex; flex-direction: column; align-items: stretch; }
.zbtn { height: 24px; background: #7f9dc6; color: #fff; font-size: 18px; font-weight: 700; line-height: 22px; border-radius: 2px; }
.zthumb { height: 11px; margin: 64px 0 auto; background: #7f9dc6; border-radius: 2px; }
.side-tab { position: absolute; left: 9px; bottom: 9px; width: 24px; height: 22px; background: #7f9dc6; border: 1px solid #5572a0; border-radius: 4px; }
.basemap { position: absolute; right: 5px; top: 397px; width: 105px; height: 89px; padding: 3px 2px; border: 1px solid #444; border-radius: 5px; background: rgba(255,255,255,.8); }
.basemap svg { display: block; width: 99px; height: 81px; border-radius: 3px; }
.basemap span { position: absolute; left: 0; right: 0; bottom: 0; height: 18px; line-height: 16px; font-size: 13px; background: rgba(255,255,255,.7); border-radius: 0 0 4px 4px; }
.attrib { position: absolute; right: 8px; bottom: 4px; padding: 0 4px; font-size: 13px; line-height: 20px; white-space: nowrap; background: rgba(255,255,255,.7); color: #333; }

/* results */
.results { flex: none; height: 236px; background: #f6f7fb; border-top: 11px solid #fcfcfb; position: relative; overflow: hidden; display: flex; flex-direction: column; }
.results-bar { height: 39px; display: flex; align-items: center; justify-content: flex-end; flex: none; }
.menu-btn.dark { margin: 0 0 1px; }
.menu-btn.dark i { background: #000; height: 3px; }
.grid { width: 100%; table-layout: fixed; border-collapse: collapse; background: #f2f2f2; border-top: 1px solid #ccc; border-bottom: 1px solid #ccc; }
.grid th { height: 42px; padding: 0 8px 3px 12px; text-align: left; font-size: 12px; font-weight: 500; color: #555; border-right: 1px solid #d4d4d4; white-space: nowrap; overflow: hidden; }
.grid th.last { border: 0; padding-right: 0; }
.w87 { width: 87px; } .w144 { width: 144px; } .w110 { width: 110px; } .w88 { width: 88px; } .w149 { width: 149px; } .w127 { width: 127px; }
.scroll { flex: 1; width: 10px; margin-left: auto; background: #fcfcfc; padding-top: 6px; }
.scroll i { display: block; border: 4px solid transparent; border-bottom: 6px solid #777; border-top: 0; width: 8px; margin: 0 auto; }

/* detail panel */
.panel { position: absolute; left: 15px; top: 62px; bottom: 0; width: 56%; background: #fff; border-left: 5px solid #913429; border-radius: 0 5px 0 0; box-shadow: 0 0 8px rgba(0,0,0,.8); padding: 0 17px; }
.panel-head { height: 69px; display: flex; align-items: center; border-bottom: 1px solid #ddd; color: #666; padding-bottom: 4px; }
.panel-head h1 { font-size: 22px; line-height: 30px; color: #666; flex: 0 0 376px; padding-bottom: 2px; }
.kind { flex: 0 0 203px; }
.pager { display: flex; align-items: center; gap: 40px; }
.pager span { width: 56px; padding-left: 12px; white-space: nowrap; }
.close { margin: 0 0 11px auto; }
.cards { padding: 15px 16px 0 0; display: flex; flex-direction: column; gap: 33px; }
.card { border: 1px solid #d8d8d8; border-top: 3px solid #6a98cf; border-radius: 4px; background: #fff; }
.card.raised { box-shadow: 0 2px 0 #999; }
.card-head { width: 100%; height: 53px; background: #f4f4f4; display: flex; align-items: center; justify-content: space-between; padding: 0 20px 3px 17px; font-size: 16px; text-align: left; color: #333; }
.fields { display: grid; grid-template-columns: 201px 275px 202px 1fr; grid-auto-rows: 29px; align-items: center; padding: 2px 0 0 26px; }
.fields dt { color: #777; }
.fields dd { color: #000; }
.fields .wide { grid-column: span 3; }
.copy-row { display: flex; justify-content: flex-end; padding: 7px 28px 0 0; }
.actions { display: flex; justify-content: flex-end; gap: 18px; padding: 18px 26px 18px 0; }
.btn { height: 35px; padding: 0 8px 3px; border-radius: 4px; background: #c44133; color: #fff; font-size: 15px; }
```
